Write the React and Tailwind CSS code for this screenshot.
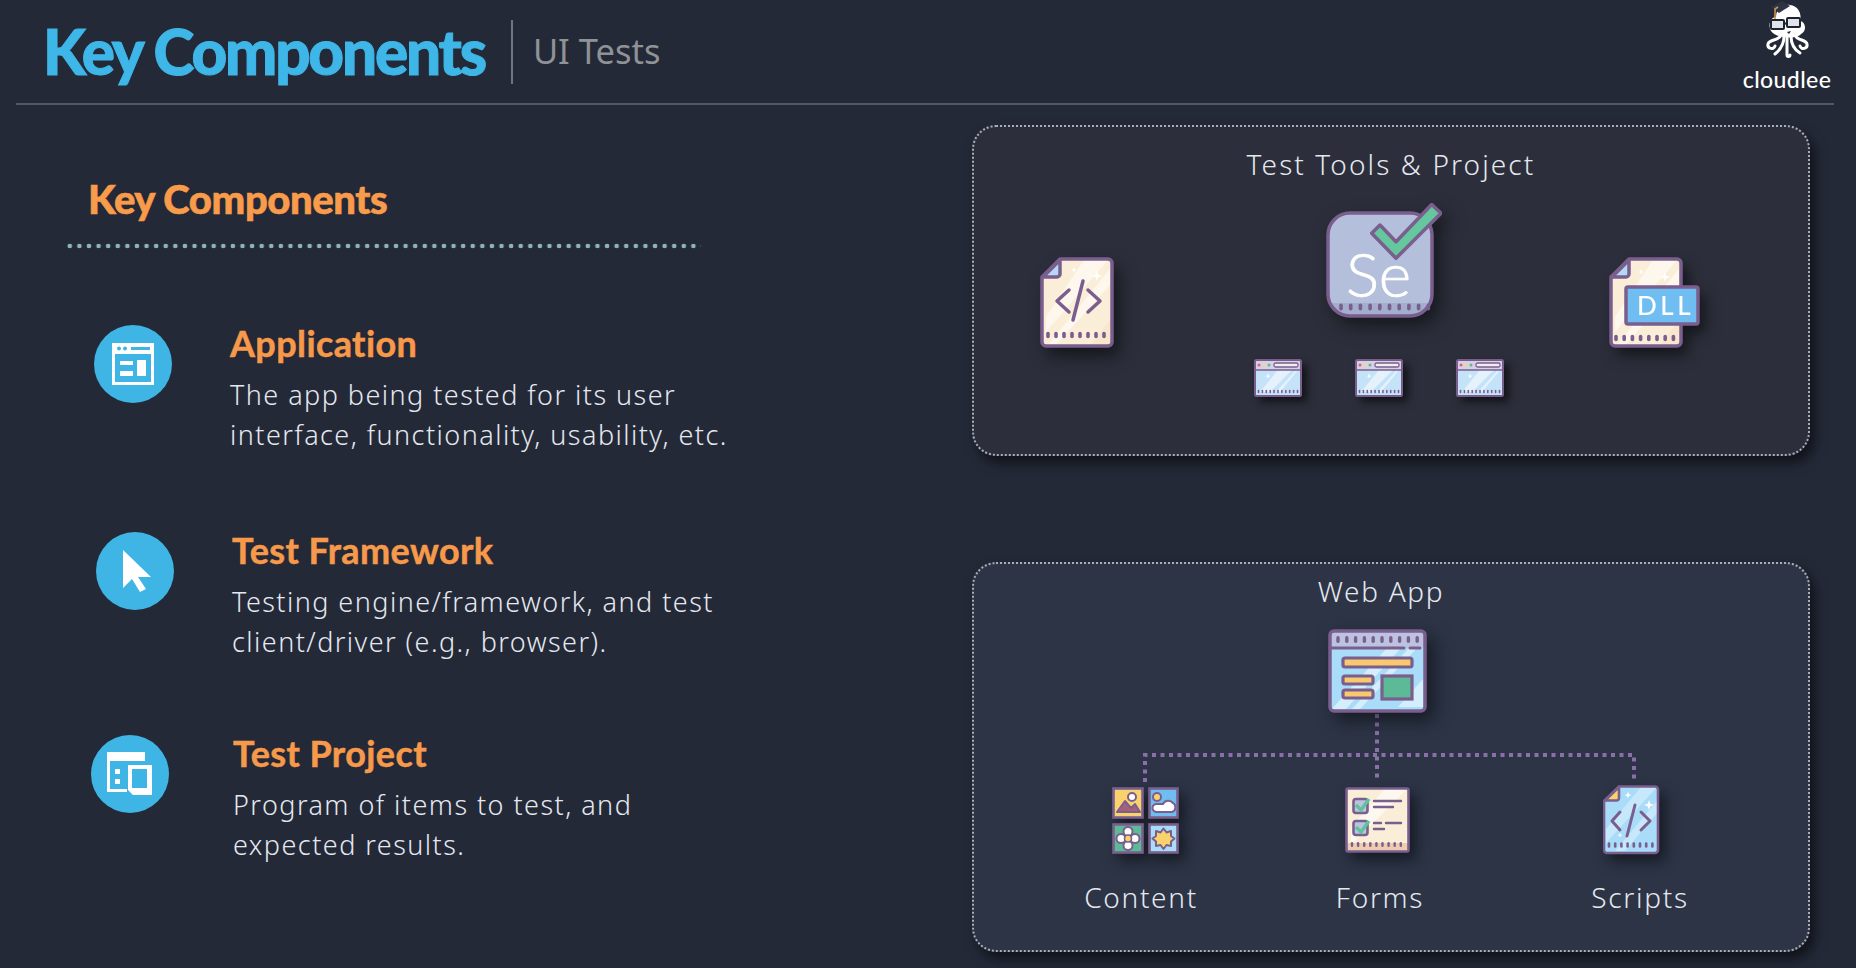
const ink = "#7a5f8e"

// little vertical dashes along the bottom of the paper icons
function Ticks({ x, y, n, step, h = 5, w = 2.6 }) {
  return (
    <g stroke={ink} strokeWidth={w} strokeLinecap="round">
      {Array.from({ length: n }).map((_, i) => (
        <line key={i} x1={x + i * step} x2={x + i * step} y1={y - h / 2} y2={y + h / 2} />
      ))}
    </g>
  )
}

function Sparkle({ x, y, r = 4 }) {
  return <path d={`M${x} ${y - r}L${x + r * 0.25} ${y - r * 0.25}L${x + r} ${y}L${x + r * 0.25} ${y + r * 0.25}L${x} ${y + r}L${x - r * 0.25} ${y + r * 0.25}L${x - r} ${y}L${x - r * 0.25} ${y - r * 0.25}Z`} fill="#fff" />
}

function Paper({ fill, fold, shade }) {
  return (
    <>
      <path d="M20 2H68a4 4 0 0 1 4 4V85a4 4 0 0 1-4 4H6a4 4 0 0 1-4-4V20Z" fill={fill} />
      <path d="M44 3H68L6 75V60ZM70 12V28L16 88H8Z" fill="#fff" opacity="0.55" />
      <path d="M72 60V85a4 4 0 0 1-4 4H50Z" fill={shade} opacity="0.6" />
      <path d="M20 2H68a4 4 0 0 1 4 4V85a4 4 0 0 1-4 4H6a4 4 0 0 1-4-4V20Z" fill="none" stroke={ink} strokeWidth="3.5" strokeLinejoin="round" />
      <path d="M20 3V17a3 3 0 0 1-3 3H3Z" fill={fold} stroke={ink} strokeWidth="3.5" strokeLinejoin="round" />
    </>
  )
}

function CodeFile() {
  return (
    <svg width="74" height="91" viewBox="0 0 74 91" className="block shrink-0 drop-shadow-[6px_9px_8px_rgba(0,0,0,0.5)]">
      <Paper fill="#fbeed8" fold="#b5d8f7" shade="#f6e2c4" />
      <Sparkle x={57} y={19} r={5} />
      <Sparkle x={34} y={13} r={3} />
      <g fill="none" stroke={ink} strokeWidth="3.5" strokeLinecap="round" strokeLinejoin="round">
        <path d="M29 33L17 44L29 55M48 33L60 44L48 55M43 24L33 63" />
      </g>
      <Ticks x={8} y={78} n={8} step={8} h={3} w={3.6} />
    </svg>
  )
}

function DllFile() {
  return (
    <svg width="91" height="91" viewBox="0 0 91 91" className="block shrink-0 drop-shadow-[6px_8px_7px_rgba(0,0,0,0.5)]">
      <Paper fill="#fbeed8" fold="#b5d8f7" shade="#f6e2c4" />
      <Sparkle x={56} y={20} r={5} />
      <Sparkle x={32} y={15} r={3} />
      <Ticks x={7} y={81} n={8} step={8.2} h={3} w={3.6} />
      <rect x="17" y="30" width="72" height="37" rx="2" fill="#70bdf2" stroke={ink} strokeWidth="3.5" />
      <text x="28" y="58" fill="#fff" fontSize="26" fontWeight="500" letterSpacing="3.5" fontFamily="Lato, sans-serif">DLL</text>
    </svg>
  )
}

function Selenium() {
  return (
    <svg width="116" height="115" viewBox="0 0 116 115" className="block shrink-0 drop-shadow-[6px_8px_9px_rgba(0,0,0,0.5)]">
      <rect x="2" y="10" width="104" height="103" rx="22" fill="#b4bfdc" />
      <path d="M2 100H106V91a22 22 0 0 1-22 22H24a22 22 0 0 1-22-22Z" fill="#9fa9c8" opacity="0.8" />
      <rect x="2" y="10" width="104" height="103" rx="22" fill="none" stroke={ink} strokeWidth="3.5" />
      <text x="20" y="94" fill="#fff" stroke="#fff" strokeWidth="0.7" fontSize="62" fontWeight="300" fontFamily="Lato, sans-serif">Se</text>
      <Ticks x={15} y={104} n={10} step={9.7} h={3.5} w={3.6} />
      <path d="M45.7 30.3L54 22L70 38.7L105.7 1.5L115 10.3L70 55.3Z" fill="#65c79d" stroke={ink} strokeWidth="3.5" strokeLinejoin="round" />
    </svg>
  )
}

function SmallWindow() {
  return (
    <svg width="48" height="38" viewBox="0 0 48 38" className="block shrink-0 drop-shadow-[5px_5px_4px_rgba(0,0,0,0.6)]">
      <rect x="1" y="1" width="46" height="36" rx="1.5" fill="#c5e3f8" />
      <path d="M24 11H38L16 33H6ZM42 11H44L26 33H22Z" fill="#fff" opacity="0.55" />
      <rect x="1" y="1" width="46" height="10" fill="#d8d0e6" />
      <rect x="1" y="1" width="46" height="36" rx="1.5" fill="none" stroke={ink} strokeWidth="2" />
      <line x1="1" x2="47" y1="11" y2="11" stroke={ink} strokeWidth="1.5" />
      <circle cx="5" cy="6" r="1.5" fill="#e0607a" />
      <circle cx="10" cy="6" r="1.5" fill="#f4d97c" />
      <circle cx="15" cy="6" r="1.5" fill="#5dba96" />
      <rect x="20" y="4" width="24" height="4" rx="1.5" fill="#eee" stroke={ink} strokeWidth="1.3" />
      <Sparkle x={14} y={17} r={2.5} />
      <Ticks x={4.5} y={32.5} n={11} step={3.9} h={2} w={1.6} />
    </svg>
  )
}

function WebApp() {
  return (
    <svg width="99" height="84" viewBox="0 0 99 84" className="block shrink-0 drop-shadow-[7px_8px_9px_rgba(0,0,0,0.5)]">
      <rect x="2" y="2" width="95" height="80" rx="4" fill="#a9dcf8" />
      <path d="M58 20H72L18 80H4ZM80 20H88L32 80H24ZM95 50V78H70Z" fill="#fff" opacity="0.5" />
      <path d="M2 19V6a4 4 0 0 1 4-4H93a4 4 0 0 1 4 4V19Z" fill="#bcc3e0" />
      <rect x="2" y="2" width="95" height="80" rx="4" fill="none" stroke={ink} strokeWidth="3.5" />
      <path d="M2 19H76M82 19H92" stroke={ink} strokeWidth="3" strokeLinecap="round" />
      <Ticks x={10} y={10.5} n={10} step={8.8} h={3.5} w={3.4} />
      <g fill="#f8c96f" stroke={ink} strokeWidth="3.2" strokeLinejoin="round">
        <rect x="15" y="29" width="69" height="9" rx="2" />
        <rect x="15" y="47" width="30" height="8" rx="2" />
        <rect x="15" y="61" width="30" height="8" rx="2" />
      </g>
      <rect x="54" y="47" width="30" height="23" fill="#5dba96" stroke={ink} strokeWidth="3.2" />
    </svg>
  )
}

function ContentTiles() {
  return (
    <svg width="67" height="67" viewBox="0 0 67 67" className="block shrink-0 drop-shadow-[6px_7px_7px_rgba(0,0,0,0.5)]">
      <g stroke={ink} strokeWidth="2.6">
        <rect x="1.5" y="1.5" width="29" height="29" fill="#f9d26e" />
        <rect x="37.5" y="1.5" width="28" height="29" fill="#70bdf2" />
        <rect x="1.5" y="37.5" width="29" height="28" fill="#5dba96" />
        <rect x="37.5" y="37.5" width="28" height="28" fill="#a9dcf8" />
        <circle cx="20" cy="10" r="4" fill="#fff" strokeWidth="2" />
        <path d="M5 25L13 14L19 21L23 17L28 25Z" fill="#a5617a" strokeWidth="2" strokeLinejoin="round" />
        <circle cx="45" cy="10" r="4" fill="#f9d26e" strokeWidth="2" />
        <path d="M44 25a4 4 0 0 1 1-8h6a6 6 0 0 1 10-1a5 5 0 0 1-1 9Z" fill="#fff" strokeWidth="2" strokeLinejoin="round" />
        <circle cx="16" cy="44.5" r="4.5" fill="#fff" strokeWidth="2" />
        <circle cx="16" cy="58.5" r="4.5" fill="#fff" strokeWidth="2" />
        <circle cx="9" cy="51.5" r="4.5" fill="#fff" strokeWidth="2" />
        <circle cx="23" cy="51.5" r="4.5" fill="#fff" strokeWidth="2" />
        <circle cx="16" cy="51.5" r="3.5" fill="#f9d26e" strokeWidth="1.6" />
        <path d="M51.5 41.5L54.5 45.5L59 44L59 49L62.5 51.5L59 54.5L59 59L54.5 58L51.5 62L48.5 58L44 59L44 54.5L40.5 51.5L44 49L44 44L48.5 45.5Z" fill="#f9d26e" strokeWidth="2" strokeLinejoin="round" />
      </g>
    </svg>
  )
}

function CheckBox({ y }) {
  return (
    <g>
      <rect x="8.5" y={y} width="14" height="14" rx="2.5" fill="#bcc3e0" stroke={ink} strokeWidth="2.6" />
      <path d={`M11 ${y + 6}L16 ${y + 11}L24 ${y}`} fill="none" stroke="#5fc49a" strokeWidth="3.4" />
    </g>
  )
}

function FormsIcon() {
  return (
    <svg width="65" height="66" viewBox="0 0 65 66" className="block shrink-0 drop-shadow-[6px_7px_7px_rgba(0,0,0,0.5)]">
      <rect x="1.5" y="1.5" width="62" height="63" rx="1.5" fill="#fbeed8" />
      <path d="M40 2H62L6 58V40Z" fill="#fff" opacity="0.6" />
      <rect x="1.5" y="56" width="62" height="8.5" fill="#eeccb0" />
      <rect x="1.5" y="1.5" width="62" height="63" rx="1.5" fill="none" stroke={ink} strokeWidth="2.6" />
      <CheckBox y={12} />
      <CheckBox y={34} />
      <g stroke={ink} strokeWidth="2.4" strokeLinecap="round">
        <path d="M29 14H56M29 20H48M29 36H36M41 36H56M29 42H39" />
      </g>
      <Ticks x={7} y={57.5} n={9} step={6.1} h={2.5} w={2.4} />
    </svg>
  )
}

function ScriptsIcon() {
  return (
    <svg width="57" height="70" viewBox="0 0 57 70" className="block shrink-0 drop-shadow-[6px_7px_7px_rgba(0,0,0,0.5)]">
      <path d="M16 1.5H52a3 3 0 0 1 3 3V65a3 3 0 0 1-3 3H4a3 3 0 0 1-3-3V16Z" fill="#a9dcf8" />
      <path d="M38 2H54L3 58V44ZM54 16V28L22 66H12Z" fill="#fff" opacity="0.35" />
      <path d="M16 1.5H52a3 3 0 0 1 3 3V65a3 3 0 0 1-3 3H4a3 3 0 0 1-3-3V16Z" fill="none" stroke={ink} strokeWidth="2.6" strokeLinejoin="round" />
      <path d="M16 2V13a2.5 2.5 0 0 1-2.5 2.5H2Z" fill="#f9d26e" stroke={ink} strokeWidth="2.6" strokeLinejoin="round" />
      <Sparkle x={25} y={10} r={3.5} />
      <Sparkle x={46} y={20} r={5} />
      <Sparkle x={17} y={50} r={2.5} />
      <path d="M17 27L9 36L17 45M38 27L47 36L38 45M32 20L24 51" fill="none" stroke={ink} strokeWidth="3" strokeLinecap="round" strokeLinejoin="round" />
      <Ticks x={6} y={60} n={8} step={6.2} h={3} w={2.6} />
    </svg>
  )
}

function Logo() {
  return (
    <svg width="46" height="60" viewBox="0 0 46 60" className="block">
      <path d="M7 31C3 23 8 17 12 17C12 8 20 4 26 5C35 6 38 15 36 21C42 22 43 31 37 34C34 39 12 39 7 31Z" fill="#fff" />
      <g fill="none" stroke="#fff" strokeWidth="3" strokeLinecap="round">
        <path d="M17 35C15 41 5 39 4 44C3 49 10 50 11 46" />
        <path d="M20 36C20 45 16 50 11 54" />
        <path d="M23 36V55C23 57 26 57 26 55" />
        <path d="M27 36C27 45 31 50 36 53" />
        <path d="M31 35C33 41 42 39 43 44C44 49 37 50 36 46" />
      </g>
      <g fill="#dfe3ea" stroke="#1f2330" strokeWidth="2">
        <rect x="7" y="20" width="13" height="9" rx="1" />
        <rect x="23" y="18" width="13" height="9" rx="1" />
      </g>
      <path d="M20 24L23 23" stroke="#1f2330" strokeWidth="2" />
      <path d="M23 32L27 31L25 34Z" fill="#1f2330" />
      <path d="M7 7L18 1L26 6L15 13Z" fill="#2f3445" />
      <path d="M14 7L11 9V19" fill="none" stroke="#c79a4a" strokeWidth="1.6" />
    </svg>
  )
}

function PointerIcon() {
  return (
    <svg width="36" height="44" viewBox="0 0 36 44" className="block">
      <path d="M3 1V39L12 30L20 43L26 40L18 28H31Z" fill="#fff" />
    </svg>
  )
}

function AppIcon() {
  return (
    <svg width="44" height="44" viewBox="0 0 44 44" className="block">
      <path d="M1 1H43V43H1ZM4 12V40H40V12Z" fill="#fff" fillRule="evenodd" />
      <circle cx="8" cy="6.5" r="2" fill="#3fb5e5" />
      <circle cx="14" cy="6.5" r="2" fill="#3fb5e5" />
      <rect x="20" y="5" width="19" height="3" fill="#3fb5e5" />
      <path d="M9 19H22V23H9ZM9 29H22V34H9ZM26 18H35V34H26Z" fill="#fff" />
    </svg>
  )
}

function ProjectIcon() {
  return (
    <svg width="48" height="46" viewBox="0 0 48 46" className="block">
      <path d="M1 1H39V10H4V38H21V41H1Z" fill="#fff" />
      <path d="M9 18H14V23H9ZM9 28H14V33H9Z" fill="#fff" />
      <path d="M22 14H46V44H27L22 39ZM26 18V37H41V18Z" fill="#fff" fillRule="evenodd" />
    </svg>
  )
}

const items = [
  { title: "Application", lines: ["The app being tested for its user", "interface, functionality, usability, etc."], icon: <AppIcon />, iconMl: "ml-[94px]", textMl: "ml-[58px]", mt: "mt-[76px]" },
  { title: "Test Framework", lines: ["Testing engine/framework, and test", "client/driver (e.g., browser)."], icon: <div className="ml-[6px]"><PointerIcon /></div>, iconMl: "ml-[96px]", textMl: "ml-[58px]", mt: "mt-[78px]" },
  { title: "Test Project", lines: ["Program of items to test, and", "expected results."], icon: <ProjectIcon />, iconMl: "ml-[91px]", textMl: "ml-[64px]", mt: "mt-[74px]" },
]

function FeatureRow({ item }) {
  return (
    <div className={`flex items-start ${item.mt}`}>
      <div className={`${item.iconMl} w-[78px] h-[78px] rounded-full bg-[#3fb5e5] flex items-center justify-center shrink-0`}>
        {item.icon}
      </div>
      <div className={item.textMl}>
        <h3 className="-mt-[2px] font-['Lato',sans-serif] font-bold text-[36px] leading-[40px] tracking-[0.4px] [-webkit-text-stroke:0.5px_#f7994a] text-[#f7994a] whitespace-nowrap">{item.title}</h3>
        <p className="mt-[12px] font-['Noto_Sans',sans-serif] font-light text-[27px] leading-[39.5px] tracking-[1.45px] text-[#e5e8ef] whitespace-nowrap">
          {item.lines[0]}<br />{item.lines[1]}
        </p>
      </div>
    </div>
  )
}

function NodeLabel({ children }) {
  return <div className="font-['Noto_Sans',sans-serif] font-light text-[28px] leading-[40px] tracking-[1.7px] text-[#e5e8ef] whitespace-nowrap">{children}</div>
}

export default function App() {
  return (
    <div className="w-[1856px] h-[968px] overflow-hidden bg-[#242938]">
      <header className="relative ml-[16px] mr-[22px] h-[105px] border-b-2 border-[#525766] flex items-start">
        <h1 className="ml-[27px] mt-[19px] font-['Lato',sans-serif] font-black text-[62px] leading-[64px] tracking-[-2.2px] [-webkit-text-stroke:1px_#3eb6e8] text-[#3eb6e8] whitespace-nowrap">Key Components</h1>
        <div className="ml-[26px] mt-[20px] w-[2px] h-[64px] bg-[#71757f]" />
        <div className="ml-[20px] mt-[29px] font-['Noto_Sans',sans-serif] text-[34.5px] leading-[44px] text-[#8f9296] whitespace-nowrap">UI Tests</div>
        <div className="ml-auto flex flex-col items-center mr-[2px] w-[90px]">
          <Logo />
          <div className="mt-[7px] font-['Lato',sans-serif] font-medium text-[23px] leading-[24px] tracking-[0.4px] text-white">cloudlee</div>
        </div>
      </header>

      <div className="flex">
        <section className="w-[972px] shrink-0">
          <h2 className="ml-[88px] mt-[72px] font-['Lato',sans-serif] font-black text-[40px] leading-[44px] tracking-[-0.4px] [-webkit-text-stroke:0.6px_#f89b4b] text-[#f89b4b] whitespace-nowrap">Key Components</h2>
          <div className="ml-[65px] mt-[22px] w-[636px] h-[6px] bg-[radial-gradient(circle,#8db4bb_2px,transparent_2.6px)] bg-[length:9.6px_6px]" />
          {items.map((item) => <FeatureRow key={item.title} item={item} />)}
        </section>

        <section className="w-[838px] shrink-0">
          <div className="mt-[20px] h-[331px] rounded-[24px] border-2 border-dotted border-[#a9adb5] bg-[#2c2f3b] shadow-[5px_7px_12px_rgba(0,0,0,0.55)]">
            <div className="mt-[17px] flex justify-center [&>div]:tracking-[2.1px]"><NodeLabel>Test Tools &amp; Project</NodeLabel></div>
            <div className="mt-[19px] flex items-start">
              <div className="ml-[66px] mt-[54px]"><CodeFile /></div>
              <div className="ml-[140px] w-[249px] shrink-0">
                <div className="ml-[72px]"><Selenium /></div>
                <div className="mt-[41px] flex gap-[53px]">
                  <SmallWindow />
                  <SmallWindow />
                  <SmallWindow />
                </div>
              </div>
              <div className="ml-[106px] mt-[54px]"><DllFile /></div>
            </div>
          </div>

          <div className="relative mt-[106px] h-[390px] rounded-[24px] border-2 border-dotted border-[#a9adb5] bg-[#2c3446] shadow-[5px_7px_12px_rgba(0,0,0,0.55)]">
            <svg className="absolute left-0 top-0" width="834" height="386" viewBox="0 0 834 386">
              <path d="M171 218V191H660V218M403 150V218" fill="none" stroke="#8a6fa8" strokeWidth="4" strokeDasharray="4 4.5" />
            </svg>
            <div className="relative mt-[7px] flex justify-center pr-[20px]"><NodeLabel>Web App</NodeLabel></div>
            <div className="relative mt-[18px] ml-[354px]"><WebApp /></div>
            <div className="relative mt-[72px] flex">
              <div className="w-[334px] shrink-0 flex flex-col items-center">
                <div className="h-[70px] flex items-center ml-[9px]"><ContentTiles /></div>
                <div className="mt-[22px]"><NodeLabel>Content</NodeLabel></div>
              </div>
              <div className="w-[144px] shrink-0 flex flex-col items-center">
                <div className="h-[70px] flex items-center -ml-[5px]"><FormsIcon /></div>
                <div className="mt-[22px]"><NodeLabel>Forms</NodeLabel></div>
              </div>
              <div className="w-[376px] shrink-0 flex flex-col items-center">
                <div className="h-[70px] flex items-center -ml-[18px]"><ScriptsIcon /></div>
                <div className="mt-[22px]"><NodeLabel>Scripts</NodeLabel></div>
              </div>
            </div>
          </div>
        </section>
      </div>
    </div>
  )
}
